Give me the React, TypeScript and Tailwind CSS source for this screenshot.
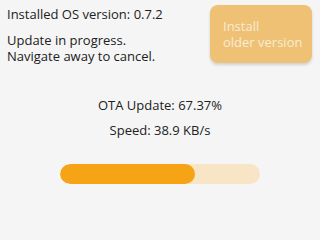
export default function App() {
  const progress = 67.37;

  return (
    <div
      className="flex h-[240px] w-[320px] flex-col bg-[#f5f5f5] text-[13px] text-[#212121]"
      style={{ fontFamily: '"Open Sans", "Liberation Sans", sans-serif' }}
    >
      <div className="flex justify-between pl-[7px] pr-[8px] pt-[5px]">
        <div className="pt-px leading-[16px]">
          <p>Installed OS version: 0.7.2</p>
          <p className="mt-[10px]">Update in progress.</p>
          <p>Navigate away to cancel.</p>
        </div>
        <button
          type="button"
          disabled
          className="h-[58px] w-[102px] whitespace-nowrap rounded-[8px] bg-[#efc175] pl-[13px] text-left text-[13px] leading-[16px] text-[#f8ecd4] shadow-[0_2px_3px_rgba(0,0,0,0.15)]"
        >
          Install
          <br />
          older version
        </button>
      </div>

      <div className="mt-[33px] flex flex-col items-center gap-[9px] leading-[16px]">
        <p>OTA Update: {progress.toFixed(2)}%</p>
        <p>Speed: 38.9 KB/s</p>
      </div>

      <div className="mx-auto mt-[26px] h-[20px] w-[200px] overflow-hidden rounded-full bg-[#f7e5c6]">
        <div className="h-full rounded-full bg-[#f6a316]" style={{ width: `${progress}%` }} />
      </div>
    </div>
  );
}
